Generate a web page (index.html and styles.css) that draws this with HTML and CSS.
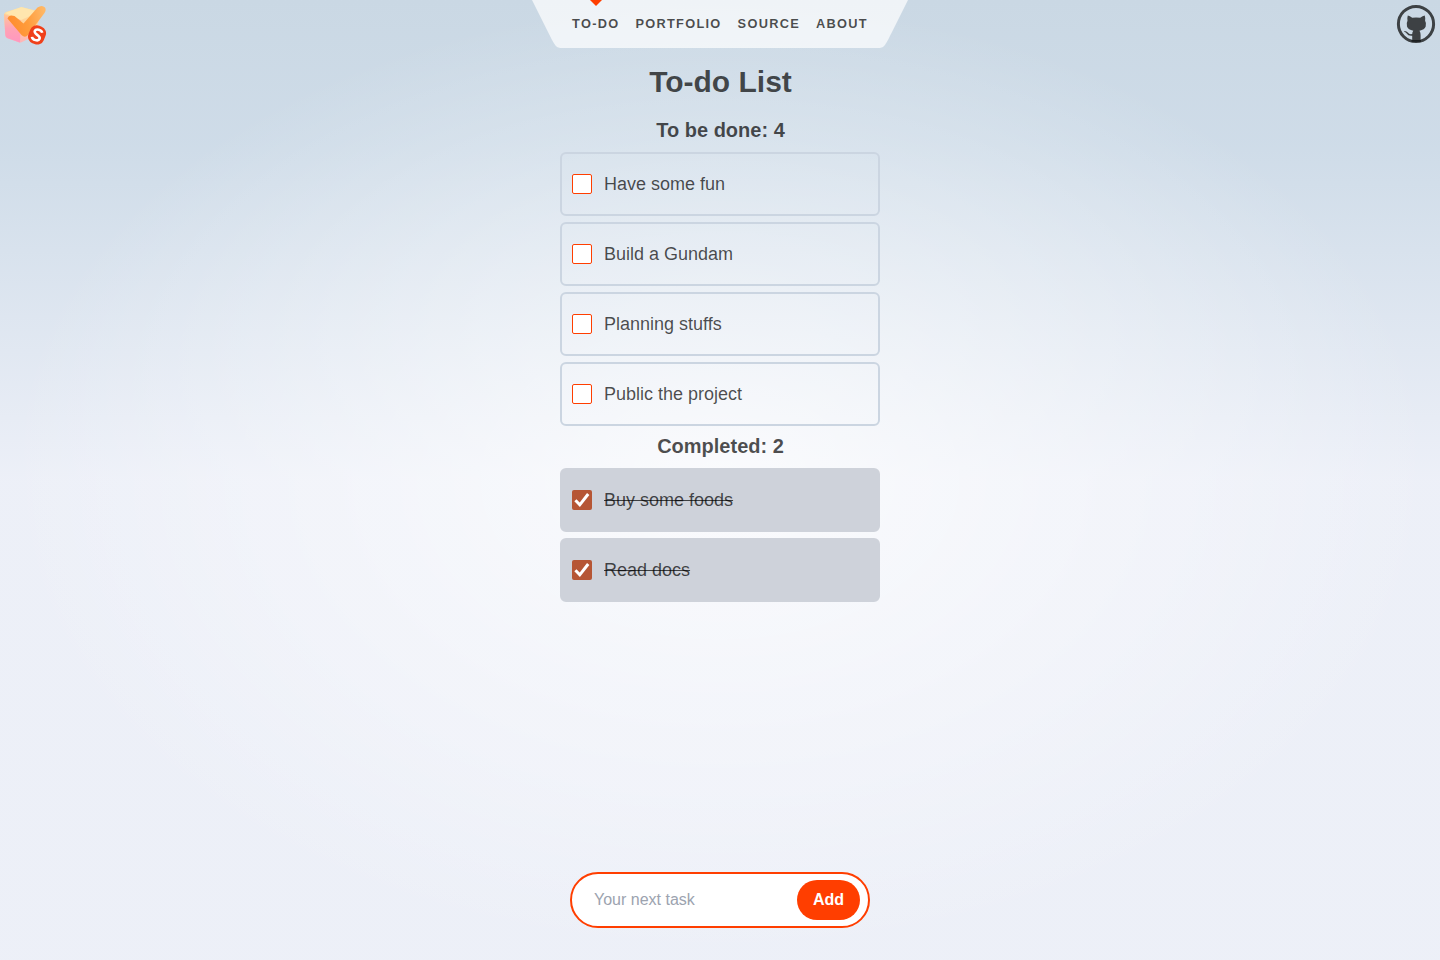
FILE: index.html
```
<!DOCTYPE html>
<html lang="en">
<head>
<meta charset="utf-8">
<title>To-do List</title>
<link rel="stylesheet" href="styles.css">
</head>
<body>
<header class="header">
  <a class="corner" href="#" aria-label="Home">
    <svg width="48" height="48" viewBox="0 0 48 48">
      <defs>
        <linearGradient id="side" x1="0" y1="0" x2="0" y2="1"><stop offset="0" stop-color="#ffc99a"/><stop offset=".5" stop-color="#ffa3b4"/><stop offset="1" stop-color="#ff96c0"/></linearGradient>
        <linearGradient id="front" x1="0" y1="0" x2="0" y2="1"><stop offset="0" stop-color="#ffe09a"/><stop offset=".5" stop-color="#ffcf9c"/><stop offset="1" stop-color="#ffb3b8"/></linearGradient>
        <linearGradient id="tick" gradientUnits="userSpaceOnUse" x1="8" y1="20" x2="44" y2="12"><stop offset="0" stop-color="#ff8c2e"/><stop offset=".5" stop-color="#ff9c3c"/><stop offset="1" stop-color="#ffb765"/></linearGradient>
      </defs>
      <path d="M4 15Q4 13 6 12L19 8Q21 7 23 7.500L38 11Q40 12 40 14L36 33Q35.500 35 34 36L22 42Q20 43 18 42L7 38Q5.500 37 5.300 35Z" fill="url(#front)"/>
      <path d="M4 14L21 20L20 42.500L7 38Q5.500 37 5.300 35Z" fill="url(#side)"/>
      <path d="M5 13L20 7.500Q21 7 23 7.500L39 12L21 20Z" fill="#ffe6ae"/>
      <path d="M7.500 18.500Q9 14 14.500 16L23.500 23.500L37.500 7.500Q42 4.500 45 7.500Q46.500 10 44.500 13L28 35Q25 38.500 21.500 35Z" fill="url(#tick)"/>
      <g transform="rotate(22 37 35)">
        <rect x="28.800" y="25.500" width="16.400" height="18.800" rx="7" fill="#f0401a"/>
        <path d="M41 31C39.500 28.600 33.500 29 33.500 32.200C33.500 35.700 40.800 34 40.800 37.500C40.800 41 34.500 41.200 33 38.600" fill="none" stroke="#fff" stroke-width="2.600"/>
      </g>
    </svg>
  </a>
  <nav class="nav">
    <svg class="wing" viewBox="0 0 2 3" aria-hidden="true"><path d="M0,0 L1,2 C1.5,3 1.5,3 2,3 L2,0 Z"/></svg>
    <ul class="links">
      <li class="link active"><a href="#">To-do</a></li>
      <li class="link"><a href="#">Portfolio</a></li>
      <li class="link"><a href="#">Source</a></li>
      <li class="link"><a href="#">About</a></li>
    </ul>
    <svg class="wing" viewBox="0 0 2 3" aria-hidden="true"><path d="M0,0 L0,3 C0.5,3 0.5,3 1,2 L2,0 Z"/></svg>
  </nav>
  <a class="corner" href="#" aria-label="GitHub">
    <svg width="48" height="48" viewBox="0 0 48 48">
      <circle cx="24" cy="24" r="17.600" fill="none" stroke="#3d4144" stroke-width="3"/>
      <path d="M15.800 15.500Q17.800 15.700 20.200 17.800Q24 17.200 28.200 17.800Q30.700 15.700 32.700 15.500Q33.700 18.500 33.100 20.800Q34.600 23 33.700 26.500Q32.500 29.700 27.500 30.800Q28.700 32.500 28.600 35V41H20.200V35.800Q16 36.200 14.700 33.500Q14 32.300 12.300 31.700V30.900Q14.500 30.700 15.800 32.600Q17.200 34.600 20.200 34Q20.200 32 21.300 30.800Q16.200 29.700 15 26.500Q14.200 23 15.500 20.800Q14.900 18.500 15.800 15.500Z" fill="#3d4144"/>
      <path d="M19.500 40H29V41.800H19.500Z" fill="#1c1f21"/>
    </svg>
  </a>
</header>
<main class="main">
  <h1 class="title">To-do List</h1>
  <section class="group">
    <h2 class="subtitle">To be done: 4</h2>
    <ul class="tasks">
      <li class="task"><span class="box"></span>Have some fun</li>
      <li class="task"><span class="box"></span>Build a Gundam</li>
      <li class="task"><span class="box"></span>Planning stuffs</li>
      <li class="task"><span class="box"></span>Public the project</li>
    </ul>
  </section>
  <section class="group done">
    <h2 class="subtitle">Completed: 2</h2>
    <ul class="tasks">
      <li class="task"><span class="box"><svg viewBox="0 0 20 20"><path d="M3.400 10.200L7.800 14.800L16.200 4"/></svg></span><s>Buy some foods</s></li>
      <li class="task"><span class="box"><svg viewBox="0 0 20 20"><path d="M3.400 10.200L7.800 14.800L16.200 4"/></svg></span><s>Read docs</s></li>
    </ul>
  </section>
  <form class="composer">
    <input class="field" type="text" placeholder="Your next task">
    <button class="add" type="button">Add</button>
  </form>
</main>
</body>
</html>
```

FILE: styles.css
```
* { box-sizing: border-box; }

body {
  margin: 0;
  height: 100vh;
  display: flex;
  flex-direction: column;
  font-family: "Liberation Sans", Arial, sans-serif;
  color: rgba(0, 0, 0, 0.7);
  background:
    radial-gradient(50% 50% at 50% 50%, rgba(255, 255, 255, 0.75) 0%, rgba(255, 255, 255, 0) 100%),
    linear-gradient(180deg, rgb(202, 216, 228) 0%, hsl(209, 36%, 86%) 15%, hsl(224, 44%, 95%) 50%);
  overflow: hidden;
}

ul { list-style: none; margin: 0; padding: 0; }
h1, h2 { margin: 0; font-weight: 700; text-align: center; }

.header { display: flex; justify-content: space-between; height: 48px; }
.corner, .corner svg { display: block; width: 48px; height: 48px; }

.nav { display: flex; }
.wing { display: block; width: 32px; height: 48px; }
.wing path { fill: rgba(255, 255, 255, 0.7); }
.links { display: flex; height: 48px; background: rgba(255, 255, 255, 0.7); }
.link { position: relative; }
.link a {
  display: flex;
  align-items: center;
  height: 100%;
  padding: 0 8px 2px;
  font-size: 12.8px;
  font-weight: 700;
  letter-spacing: 1.28px;
  text-transform: uppercase;
  text-decoration: none;
  color: rgba(0, 0, 0, 0.7);
}
.active::before {
  content: "";
  position: absolute;
  top: 0;
  left: calc(50% - 6px);
  border: 6px solid transparent;
  border-top-color: #ff3e00;
}

.main {
  flex: 1;
  display: flex;
  flex-direction: column;
  align-items: center;
  padding: 16px 0 32px;
}
.title { padding-left: 1px; font-size: 30px; line-height: 36px; }
.group { width: 320px; margin-top: 16px; }
.done { margin-top: 6px; }
.subtitle { padding-left: 1px; font-size: 20px; line-height: 28px; }
.tasks { display: flex; flex-direction: column; gap: 6px; margin-top: 8px; }
.task {
  display: flex;
  align-items: center;
  gap: 12px;
  height: 64px;
  padding: 0 10px;
  border: 2px solid #cbd5e1;
  border-radius: 6px;
  font-size: 18px;
}
.done .task { background: #ced2da; border-color: #ced2da; }
.box {
  width: 20px;
  height: 20px;
  border: 1px solid #ff3e00;
  border-radius: 2px;
  background: #fff;
}
.done .box { border: 0; background: #b65635; }
.box svg { display: block; width: 20px; height: 20px; }
.box path { fill: none; stroke: #fff; stroke-width: 3; }

.composer {
  display: flex;
  align-items: center;
  width: 300px;
  height: 56px;
  margin-top: auto;
  padding: 0 8px 0 22px;
  border: 2px solid #ff3e00;
  border-radius: 28px;
  background: #fff;
}
.field {
  flex: 1;
  min-width: 0;
  padding: 0;
  border: 0;
  outline: 0;
  background: transparent;
  font: 16px "Liberation Sans", Arial, sans-serif;
}
.field::placeholder { color: #9ca3af; }
.add {
  width: 63px;
  height: 40px;
  padding: 0;
  border: 0;
  border-radius: 20px;
  background: #ff3e00;
  color: #fff;
  font: 700 16px "Liberation Sans", Arial, sans-serif;
}
```
